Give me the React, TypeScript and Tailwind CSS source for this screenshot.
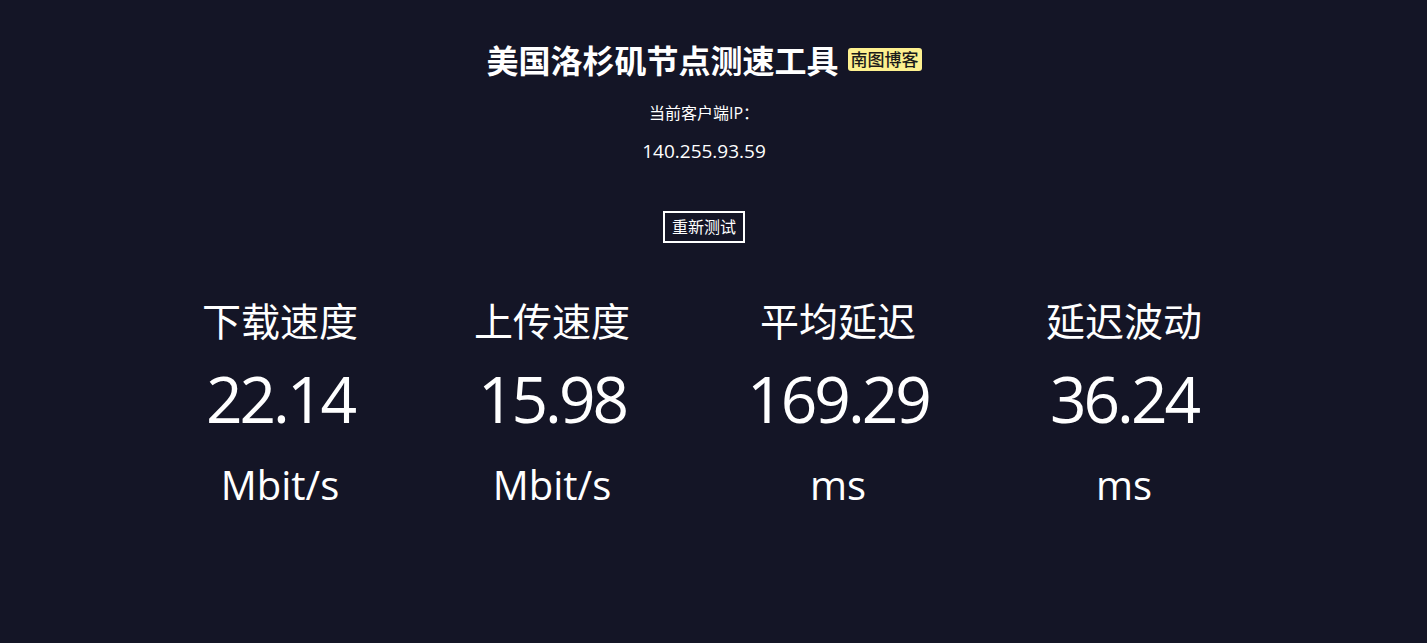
import React from "react";

const stats = [
  { label: "下载速度", value: "22.14", unit: "Mbit/s", w: "w-[152px]" },
  { label: "上传速度", value: "15.98", unit: "Mbit/s", w: "w-[152px]" },
  { label: "平均延迟", value: "169.29", unit: "ms", w: "w-[180px]" },
  { label: "延迟波动", value: "36.24", unit: "ms", w: "w-[152px]" },
];

export default function App() {
  return (
    <div
      className="w-full h-[643px] bg-[#141526] text-white overflow-hidden"
      style={{ fontFamily: '"Open Sans", "Noto Sans CJK SC", sans-serif' }}
    >
      <div className="w-[1408px] flex flex-col items-center">
        <div className="mt-[41px] flex items-center">
          <h1 className="text-[32px] leading-[40px] font-bold">美国洛杉矶节点测速工具</h1>
          <span className="ml-[9px] mt-[-3px] bg-[#fdf08f] text-[#1a1a1a] text-[17px] leading-[23px] px-[3px] rounded-[3px] font-medium">
            南图博客
          </span>
        </div>
        <div className="mt-[22px] text-[16px] leading-[20px]">当前客户端IP：</div>
        <div className="mt-[16px] text-[19px] leading-[24px]">140.255.93.59</div>
        <button className="mt-[48px] h-[32px] w-[82px] border-2 border-white text-[16px] leading-[20px] text-white">
          重新测试
        </button>
        <div className="mt-[54px] w-full flex justify-center gap-[120px] pr-[4px]">
          {stats.map((s) => (
            <div key={s.label} className={`${s.w} flex flex-col items-center shrink-0`}>
              <div className="text-[39px] leading-[48px] whitespace-nowrap">{s.label}</div>
              <div className="mt-[14px] text-[64px] leading-[80px] tracking-[-3px] whitespace-nowrap">
                {s.value}
              </div>
              <div className="mt-[22px] text-[40px] leading-[48px] whitespace-nowrap">{s.unit}</div>
            </div>
          ))}
        </div>
      </div>
    </div>
  );
}
